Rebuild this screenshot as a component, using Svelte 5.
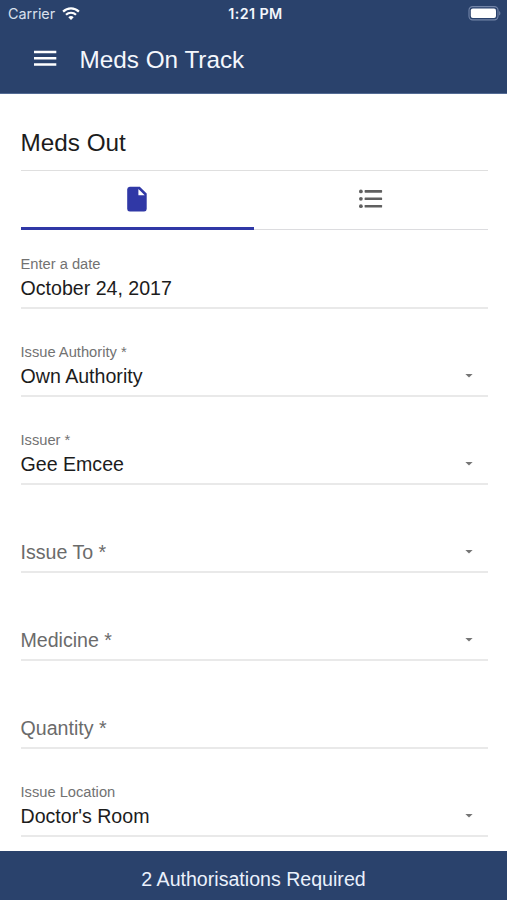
<script>
  const fields = [
    { label: 'Enter a date', value: 'October 24, 2017', select: false },
    { label: 'Issue Authority *', value: 'Own Authority', select: true },
    { label: 'Issuer *', value: 'Gee Emcee', select: true },
    { label: 'Issue To *', value: '', select: true },
    { label: 'Medicine *', value: '', select: true },
    { label: 'Quantity *', value: '', select: false },
    { label: 'Issue Location', value: "Doctor's Room", select: true },
  ];
</script>

<div class="screen">
  <header>
    <div class="status">
      <div class="carrier">
        <span>Carrier</span>
        <svg width="18" height="14" viewBox="0 0 18 14" fill="none" stroke="#fff" stroke-width="2.2">
          <path d="M1.1 4.6a11.3 11.3 0 0 1 15.8 0" />
          <path d="M4 7.8a7.1 7.1 0 0 1 10 0" />
          <path d="M9 13 6.3 10.2a3.9 3.9 0 0 1 5.4 0z" fill="#fff" stroke="none" />
        </svg>
      </div>
      <span class="time">1:21 PM</span>
      <svg class="battery" width="33" height="15" viewBox="0 0 33 15">
        <rect x="1" y="0.6" width="29" height="13.3" rx="3.6" fill="none" stroke="#7385a8" stroke-width="1.1" />
        <rect x="2.8" y="2.5" width="25.2" height="9.5" rx="2" fill="#fff" />
        <path d="M31.2 5v4.6c1.6-.8 1.6-3.8 0-4.6z" fill="#7385a8" />
      </svg>
    </div>
    <div class="toolbar">
      <svg width="23" height="17" viewBox="0 0 23 17" fill="#fff">
        <path d="M0 .8h22.3v2.5H0zM0 7.1h22.3v2.5H0zM0 13.3h22.3v2.5H0z" />
      </svg>
      <h1>Meds On Track</h1>
    </div>
  </header>

  <main>
    <h2>Meds Out</h2>
    <div class="tabs">
      <div class="tab active">
        <svg width="20" height="26" viewBox="0 0 20 26" fill="#3038a6" fill-rule="evenodd">
          <path d="M2.8.7h10L19.7 7.6v15.3a2.6 2.6 0 0 1-2.6 2.5H2.8A2.6 2.6 0 0 1 .2 22.9V3.2A2.6 2.6 0 0 1 2.8.7zM11.4 2.9v6.3h6.3z" />
        </svg>
      </div>
      <div class="tab">
        <svg width="24" height="20" viewBox="0 0 24 20" fill="#606060">
          <circle cx="1.9" cy="2.4" r="1.9" />
          <circle cx="1.9" cy="9.8" r="1.9" />
          <circle cx="1.9" cy="17.2" r="1.9" />
          <rect x="5.6" y="1.1" width="17.5" height="2.6" rx=".6" />
          <rect x="5.6" y="8.5" width="17.5" height="2.6" rx=".6" />
          <rect x="5.6" y="15.9" width="17.5" height="2.6" rx=".6" />
        </svg>
      </div>
    </div>

    <div class="form">
      {#each fields as field}
        <div class="field">
          <div class="label">{field.value ? field.label : ''}</div>
          <div class="row">
            <span class:placeholder={!field.value}>{field.value || field.label}</span>
            {#if field.select}
              <svg width="8" height="4" viewBox="0 0 8 4"><path d="M.4 0h7.2L4 3.6z" fill="#757575" /></svg>
            {/if}
          </div>
        </div>
      {/each}
    </div>
  </main>

  <footer>2 Authorisations Required</footer>
</div>

<style>
  .screen {
    width: 507px;
    height: 900px;
    display: flex;
    flex-direction: column;
    overflow: hidden;
    background: #fff;
    font-family: "Liberation Sans", Arial, sans-serif;
    color: #1c1c1c;
  }
  svg { display: block; flex: none; }
  header {
    height: 94px;
    flex: none;
    box-sizing: border-box;
    background: #2a426c;
    border-bottom: 1px solid #536b94;
    color: #f4f7fc;
  }
  .status {
    height: 27px;
    padding: 0 6px 0 8px;
    display: grid;
    grid-template-columns: 1fr auto 1fr;
    align-items: center;
    font: 14.4px/27px Inter, sans-serif;
  }
  .carrier {
    display: flex;
    align-items: center;
    gap: 6.5px;
    color: #d9e0ec;
  }
  .time {
    padding-left: 2px;
    font-weight: 600;
    font-size: 14.3px;
    letter-spacing: 0.4px;
  }
  .battery { justify-self: end; }
  .toolbar {
    height: 66px;
    padding-left: 34px;
    display: flex;
    align-items: flex-start;
  }
  .toolbar svg { margin-top: 23px; }
  h1, h2 {
    margin: 0;
    font-weight: 400;
    font-size: 24.3px;
  }
  h1 { margin-left: 22.5px; line-height: 66px; }
  main {
    flex: 1;
    min-height: 0;
    padding: 0 19.5px 0 20.5px;
  }
  h2 {
    height: 76px;
    line-height: 98px;
    border-bottom: 1px solid #dfdfdf;
  }
  .tabs {
    height: 59px;
    box-sizing: border-box;
    display: flex;
    box-shadow: inset 0 -1px #dcdcdf;
  }
  .tab {
    flex: 1;
    display: flex;
    justify-content: center;
    align-items: center;
    border-bottom: 3px solid transparent;
  }
  .tab.active { border-color: #3038a6; }
  .form {
    padding-top: 20px;
    display: flex;
    flex-direction: column;
    gap: 29px;
  }
  .field {
    height: 59px;
    box-sizing: border-box;
    border-bottom: 2px solid #e9e9e9;
  }
  .label {
    height: 27px;
    font-size: 14.7px;
    line-height: 29px;
    color: #727272;
  }
  .row {
    height: 22px;
    padding-right: 15px;
    display: flex;
    justify-content: space-between;
    align-items: center;
    font-size: 19.6px;
    line-height: 22px;
  }
  .placeholder { color: #6b6b6b; }
  footer {
    height: 49px;
    flex: none;
    background: #2a426c;
    color: #eaf1fc;
    text-align: center;
    font-size: 19.6px;
    line-height: 56px;
  }
</style>
